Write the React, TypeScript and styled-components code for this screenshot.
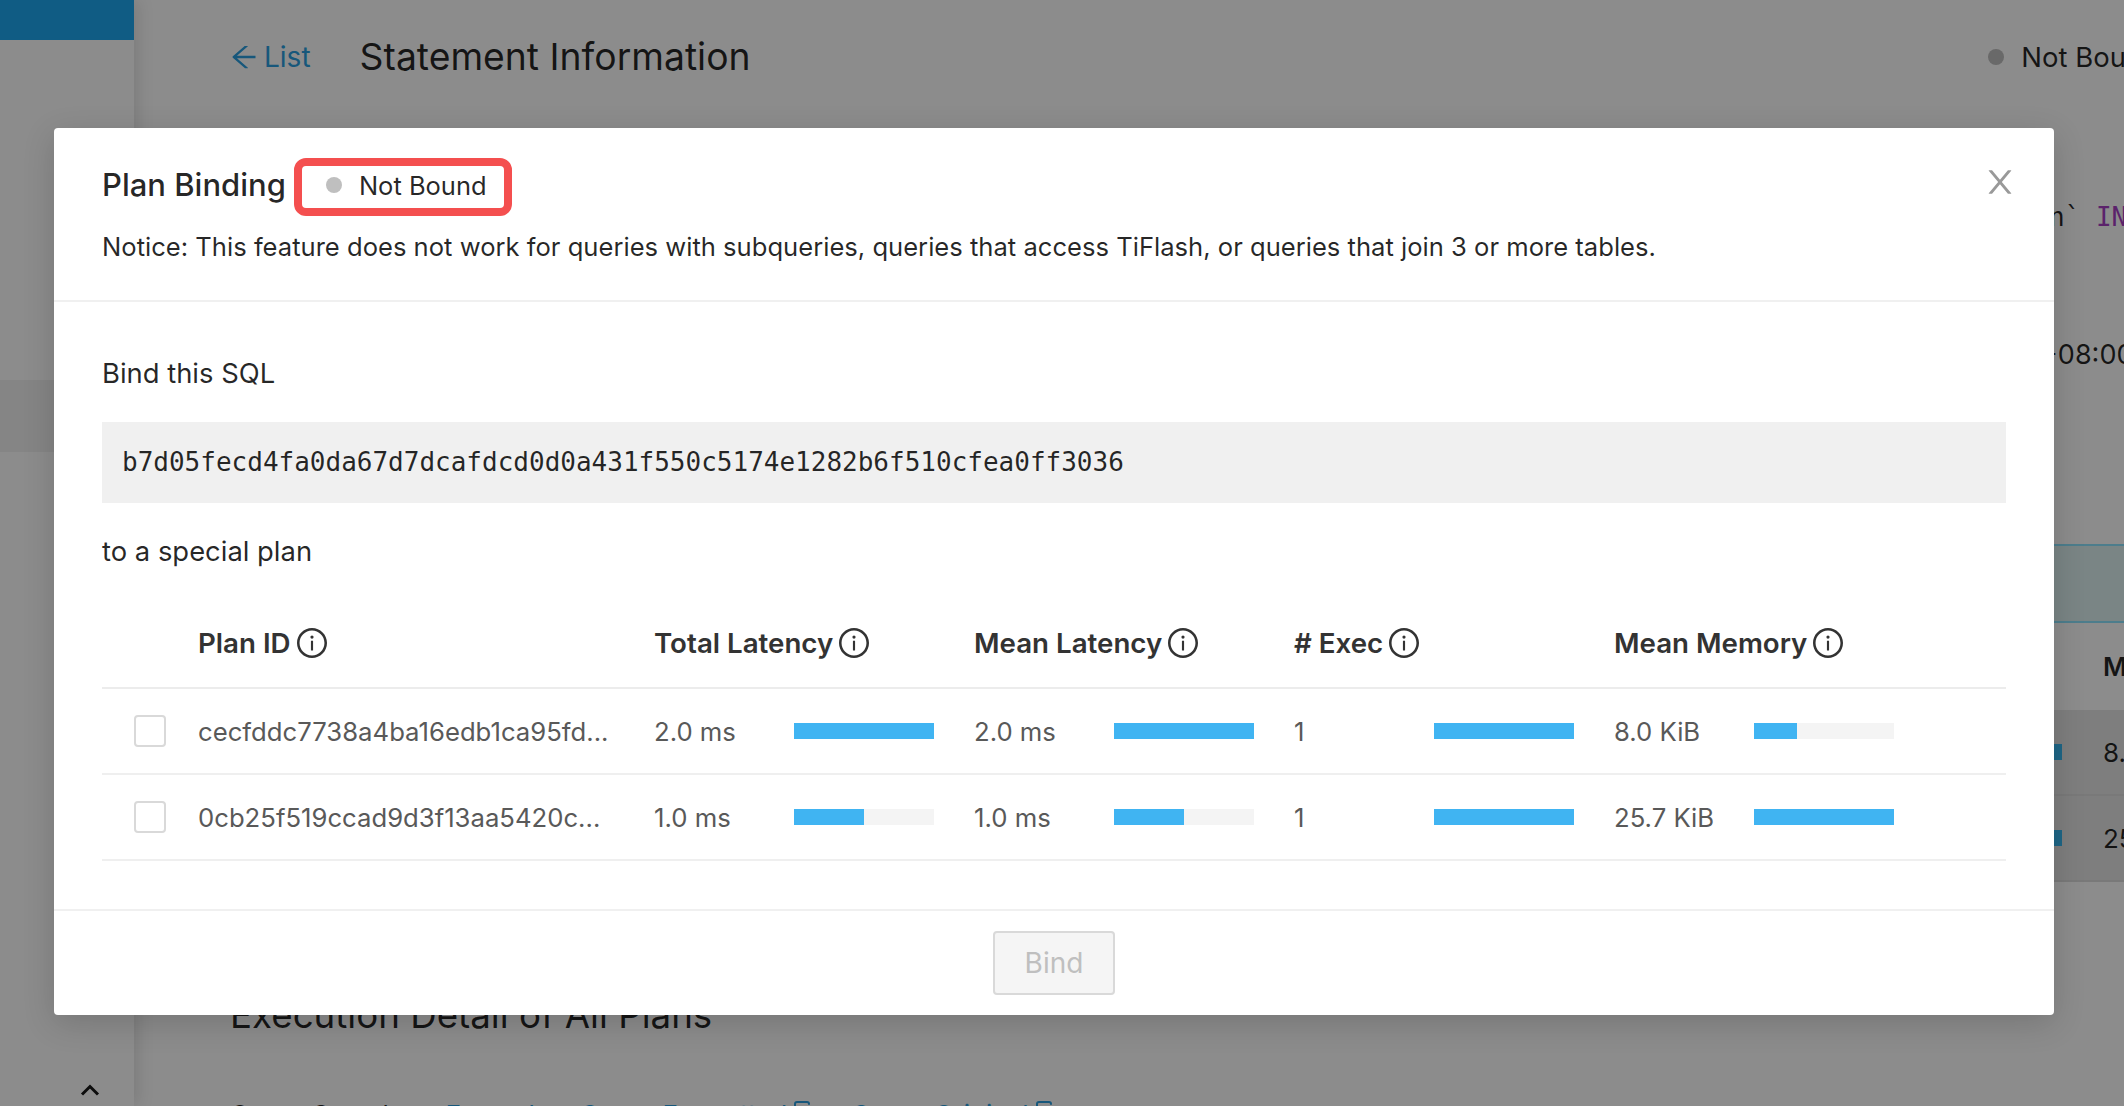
import styled, { createGlobalStyle } from "styled-components";
import { Copy } from "lucide-react";

const GlobalStyle = createGlobalStyle`
  html, body {
    margin: 0;
    height: 100%;
    overflow: hidden;
    background: #fff;
    font-family: Inter, "Liberation Sans", sans-serif;
    color: rgba(0, 0, 0, 0.85);
  }
  * {
    box-sizing: border-box;
  }
`;

const Page = styled.div`
  position: relative;
  display: flex;
  width: 2124px;
  height: 1106px;
  overflow: hidden;
`;

const Sidebar = styled.aside`
  display: flex;
  flex-direction: column;
  flex: none;
  width: 134px;
  background: #fff;
  box-shadow: 4px 0 16px rgba(0, 0, 0, 0.12);
  z-index: 1;
`;

const LogoBar = styled.div`
  height: 40px;
  background: #1ea8f0;
`;

const NavItem = styled.div`
  height: 72px;
  margin-top: 340px;
  background: #f2f2f2;
`;

const CollapseButton = styled.div`
  display: flex;
  margin: auto 0 10px 80px;
  color: #1a1a1a;
`;

const Main = styled.main`
  flex: none;
  width: 1990px;
  padding-left: 96px;
`;

const Content = styled.div`
  width: 1929px;
`;

const TopBar = styled.div`
  display: flex;
  align-items: center;
  height: 114px;
`;

const BackLink = styled.a`
  display: flex;
  align-items: center;
  gap: 6px;
  font-size: 28px;
  color: #2a9fe0;
`;

const PageTitle = styled.h2`
  margin: 0 0 0 49px;
  font-size: 37.3px;
  font-weight: 400;
  line-height: 56px;
`;

const TopStatus = styled.div`
  display: flex;
  align-items: center;
  gap: 17px;
  margin-left: auto;
  font-size: 27.5px;
`;

const Dot = styled.span`
  flex: none;
  width: 16px;
  height: 16px;
  border-radius: 50%;
  background: #bfbfbf;
`;

const SqlLine = styled.div`
  margin: 83px 0 0 1819px;
  font-family: "DejaVu Sans Mono", monospace;
  font-size: 26px;
  line-height: 40px;
  white-space: nowrap;
  span {
    color: #a63fc4;
  }
`;

const TimeLine = styled.div`
  margin: 98px 0 0 1810px;
  font-size: 27px;
  line-height: 40px;
  white-space: nowrap;
`;

const SelectedBand = styled.div`
  height: 79px;
  margin-top: 169px;
  background: #def2f3;
  border-top: 2px solid #8ce3ff;
  border-bottom: 2px solid #8ce3ff;
`;

const BehindHeader = styled.div`
  height: 87px;
  padding-left: 1873px;
  font-size: 26px;
  font-weight: 600;
  line-height: 87px;
`;

const BehindRow = styled.div`
  display: flex;
  align-items: center;
  height: 86px;
  padding-left: 1824px;
  background: #e5e5e5;
  border-bottom: 2px solid #dcdcdc;
  font-size: 26px;
  white-space: nowrap;
  &:last-of-type {
    border-bottom: 0;
  }
`;

const BehindBar = styled.span`
  flex: none;
  width: 8px;
  height: 16px;
  margin-right: 41px;
  background: #38baf5;
`;

const SectionTitle = styled.h2`
  margin: 105px 0 0;
  font-size: 36.7px;
  font-weight: 400;
  line-height: 56px;
`;

const SampleRow = styled.div`
  display: flex;
  align-items: center;
  height: 40px;
  margin-top: 51px;
  font-size: 26px;
  white-space: nowrap;
`;

const SampleLink = styled.a<{ $gap: number }>`
  display: flex;
  align-items: center;
  gap: 6px;
  margin-left: ${(p) => p.$gap}px;
  color: #2a9fe0;
  svg {
    margin-top: -4px;
  }
`;

const Mask = styled.div`
  position: absolute;
  inset: 0;
  z-index: 2;
  background: rgba(0, 0, 0, 0.45);
`;

const Modal = styled.div`
  position: absolute;
  left: 54px;
  top: 128px;
  z-index: 3;
  display: flex;
  flex-direction: column;
  width: 2000px;
  height: 887px;
  background: #fff;
  border-radius: 4px;
  box-shadow: 0 8px 32px rgba(0, 0, 0, 0.16);
`;

const ModalHeader = styled.header`
  position: relative;
  height: 174px;
  padding: 30px 48px 0;
  border-bottom: 2px solid #f0f0f0;
`;

const TitleRow = styled.div`
  display: flex;
  align-items: center;
  gap: 8px;
  height: 58px;
`;

const ModalTitle = styled.div`
  padding-bottom: 5px;
  font-size: 31px;
  font-weight: 500;
`;

const Badge = styled.div`
  display: flex;
  align-items: center;
  gap: 17px;
  width: 218px;
  height: 58px;
  padding: 0 0 4px 24px;
  border: 8px solid #f44f4f;
  border-radius: 12px;
  font-size: 25.5px;
  white-space: nowrap;
`;

const Notice = styled.div`
  margin-top: 11px;
  font-size: 25.6px;
  line-height: 40px;
`;

const CloseButton = styled.button`
  position: absolute;
  top: 38px;
  right: 38px;
  display: flex;
  padding: 0;
  border: 0;
  background: none;
  color: #999;
`;

const ModalBody = styled.div`
  flex: 1;
  padding: 51px 48px 0;
  font-size: 27.4px;
`;

const Label = styled.div`
  line-height: 40px;
`;

const HashBlock = styled.div`
  height: 81px;
  margin: 29px 0 28px;
  padding-left: 20px;
  background: #f0f0f0;
  font-family: "DejaVu Sans Mono", monospace;
  font-size: 26px;
  line-height: 80px;
`;

const TableGrid = styled.div`
  display: grid;
  grid-template-columns: 85px 456px 320px 320px 320px 1fr;
  align-items: center;
  border-bottom: 2px solid #efefef;
`;

const HeadRow = styled(TableGrid)`
  height: 91px;
  margin-top: 27px;
  border-bottom-color: #ececec;
`;

const BodyRow = styled(TableGrid)`
  height: 86px;
`;

const HeadCell = styled.div`
  display: flex;
  align-items: center;
  gap: 6px;
  padding-left: 11px;
  color: #333;
  font-size: 27.7px;
  font-weight: 600;
`;

const CheckCell = styled.div`
  padding-left: 32px;
`;

const Checkbox = styled.span`
  display: block;
  width: 32px;
  height: 32px;
  border: 2px solid #d9d9d9;
  border-radius: 4px;
  background: #fff;
`;

const ValueCell = styled.div`
  display: flex;
  align-items: center;
  padding-left: 11px;
  color: #595959;
  font-size: 25.7px;
  white-space: nowrap;
`;

const BarValue = styled.span`
  flex: none;
  width: 140px;
`;

const BarTrack = styled.span`
  flex: none;
  width: 140px;
  height: 16px;
  background: #f4f4f4;
`;

const BarFill = styled.span`
  display: block;
  height: 100%;
  background: #40b4f2;
`;

const ModalFooter = styled.footer`
  display: flex;
  justify-content: center;
  height: 106px;
  padding-top: 20px;
  border-top: 2px solid #f0f0f0;
`;

const BindButton = styled.button`
  width: 122px;
  height: 64px;
  padding: 0;
  border: 2px solid #d9d9d9;
  border-radius: 4px;
  background: #f5f5f5;
  color: #bfbfbf;
  font-family: inherit;
  font-size: 28px;
`;

const InfoIcon = () => (
  <svg width="30" height="30" viewBox="64 64 896 896" fill="currentColor">
    <path d="M512 64C264.6 64 64 264.6 64 512s200.6 448 448 448 448-200.6 448-448S759.4 64 512 64zm0 820c-205.4 0-372-166.6-372-372s166.6-372 372-372 372 166.6 372 372-166.6 372-372 372z" />
    <path d="M464 336a48 48 0 1096 0 48 48 0 10-96 0zm72 112h-48c-4.4 0-8 3.6-8 8v272c0 4.4 3.6 8 8 8h48c4.4 0 8-3.6 8-8V456c0-4.4-3.6-8-8-8z" />
  </svg>
);

const CloseIcon = () => (
  <svg width="32" height="32" viewBox="64 64 896 896" fill="currentColor">
    <path d="M563.8 512l262.5-312.9c4.4-5.2.7-13.1-6.1-13.1h-79.8c-4.7 0-9.2 2.1-12.3 5.7L511.6 449.8 295.1 191.7c-3-3.6-7.5-5.7-12.3-5.7H203c-6.8 0-10.5 7.9-6.1 13.1L459.4 512 196.9 824.9A7.95 7.95 0 00203 838h79.8c4.7 0 9.2-2.1 12.3-5.7l216.5-258.1 216.5 258.1c3 3.6 7.5 5.7 12.3 5.7h79.8c6.8 0 10.5-7.9 6.1-13.1L563.8 512z" />
  </svg>
);

const ArrowLeftIcon = () => (
  <svg width="28" height="28" viewBox="64 64 896 896" fill="currentColor">
    <path d="M872 474H286.9l350.2-304c5.6-4.9 2.2-14-5.2-14h-88.5c-3.9 0-7.6 1.4-10.5 3.9L155 487.8a31.96 31.96 0 000 48.3L535.1 866c1.5 1.3 3.3 2 5.2 2h91.5c7.4 0 10.8-9.2 5.2-14L286.9 550H872c4.4 0 8-3.6 8-8v-60c0-4.4-3.6-8-8-8z" />
  </svg>
);

const UpIcon = () => (
  <svg width="20" height="12" viewBox="0 0 20 12" fill="none" stroke="currentColor" strokeWidth="3">
    <path d="M2 10.5 10 2.5l8 8" />
  </svg>
);

const columns = ["Plan ID", "Total Latency", "Mean Latency", "# Exec", "Mean Memory"];

const plans = [
  {
    id: "cecfddc7738a4ba16edb1ca95fd...",
    bars: [
      { text: "2.0 ms", pct: 100 },
      { text: "2.0 ms", pct: 100 },
      { text: "1", pct: 100 },
      { text: "8.0 KiB", pct: 31 },
    ],
  },
  {
    id: "0cb25f519ccad9d3f13aa5420c...",
    bars: [
      { text: "1.0 ms", pct: 50 },
      { text: "1.0 ms", pct: 50 },
      { text: "1", pct: 100 },
      { text: "25.7 KiB", pct: 100 },
    ],
  },
];

const App = () => {
  return (
    <Page>
      <GlobalStyle />
      <Sidebar>
        <LogoBar />
        <NavItem />
        <CollapseButton>
          <UpIcon />
        </CollapseButton>
      </Sidebar>
      <Main>
        <Content>
          <TopBar>
            <BackLink>
              <ArrowLeftIcon />
              List
            </BackLink>
            <PageTitle>Statement Information</PageTitle>
            <TopStatus>
              <Dot />
              Not Bound
            </TopStatus>
          </TopBar>
          <SqlLine>
            n` <span>IN</span>
          </SqlLine>
          <TimeLine>+08:00</TimeLine>
          <SelectedBand />
          <BehindHeader>Mean</BehindHeader>
          <BehindRow>
            <BehindBar />
            8.0 KiB
          </BehindRow>
          <BehindRow>
            <BehindBar />
            25.7 KiB
          </BehindRow>
          <SectionTitle>Execution Detail of All Plans</SectionTitle>
          <SampleRow>
            Query Sample:
            <SampleLink $gap={34}>Example</SampleLink>
            <SampleLink $gap={30}>
              Query Formatted
              <Copy size={24} />
            </SampleLink>
            <SampleLink $gap={34}>
              Query Original
              <Copy size={24} />
            </SampleLink>
          </SampleRow>
        </Content>
      </Main>
      <Mask />
      <Modal>
        <ModalHeader>
          <TitleRow>
            <ModalTitle>Plan Binding</ModalTitle>
            <Badge>
              <Dot />
              Not Bound
            </Badge>
          </TitleRow>
          <Notice>
            Notice: This feature does not work for queries with subqueries, queries that access TiFlash, or queries that join 3 or more tables.
          </Notice>
          <CloseButton>
            <CloseIcon />
          </CloseButton>
        </ModalHeader>
        <ModalBody>
          <Label>Bind this SQL</Label>
          <HashBlock>b7d05fecd4fa0da67d7dcafdcd0d0a431f550c5174e1282b6f510cfea0ff3036</HashBlock>
          <Label>to a special plan</Label>
          <HeadRow>
            <span />
            {columns.map((name) => (
              <HeadCell key={name}>
                {name}
                <InfoIcon />
              </HeadCell>
            ))}
          </HeadRow>
          {plans.map((plan) => (
            <BodyRow key={plan.id}>
              <CheckCell>
                <Checkbox />
              </CheckCell>
              <ValueCell>{plan.id}</ValueCell>
              {plan.bars.map((bar, index) => (
                <ValueCell key={index}>
                  <BarValue>{bar.text}</BarValue>
                  <BarTrack>
                    <BarFill style={{ width: `${bar.pct}%` }} />
                  </BarTrack>
                </ValueCell>
              ))}
            </BodyRow>
          ))}
        </ModalBody>
        <ModalFooter>
          <BindButton disabled>Bind</BindButton>
        </ModalFooter>
      </Modal>
    </Page>
  );
};

export default App;
